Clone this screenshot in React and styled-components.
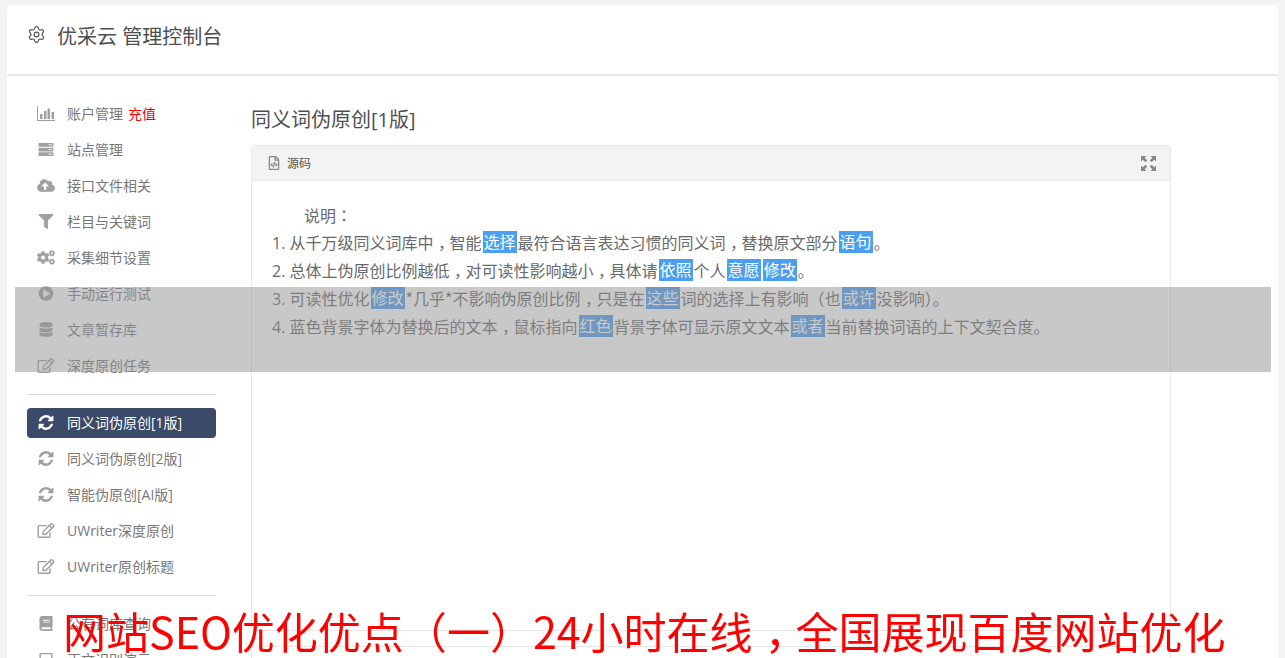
import styled, { createGlobalStyle } from "styled-components";
import {
  FaServer,
  FaCloudUploadAlt,
  FaFilter,
  FaCogs,
  FaPlayCircle,
  FaDatabase,
  FaRegEdit,
  FaBook,
  FaRegSquare,
  FaRegFileCode,
} from "react-icons/fa";
import { Settings } from "lucide-react";

const GlobalStyle = createGlobalStyle`
  html, body {
    margin: 0;
    padding: 0;
    height: 658px;
    overflow: hidden;
    background: #f3f3f3;
  }
  body {
    font-family: "Open Sans", "Noto Sans CJK SC", sans-serif;
    color: #676a6c;
  }
`;

const Page = styled.div`
  height: 658px;
  padding: 5px 7px 0;
  box-sizing: border-box;
  overflow: hidden;
`;

const Card = styled.div`
  background: #fff;
  border-radius: 5px 5px 0 0;
  height: 653px;
  overflow: hidden;
`;

const CardHeader = styled.header`
  height: 51px;
  border-bottom: 2px solid #e7eaec;
  display: flex;
  align-items: flex-start;
  padding: 18px 0 0 20px;
  gap: 11px;
  color: #555;

  h1 {
    margin: 1px 0 0;
    font-size: 20px;
    line-height: 26px;
    font-weight: 400;
    color: #4d4f51;
  }

  svg {
    margin-top: 2px;
  }
`;

const CardBody = styled.div`
  display: flex;
  gap: 35px;
  padding: 20px 0 0 20px;
`;

const Sidebar = styled.nav`
  width: 189px;
  flex: none;
  display: flex;
  flex-direction: column;
`;

const Row = styled.div`
  height: 36px;
  flex: none;
  box-sizing: border-box;
  padding: 0 0 2px 10px;
  display: flex;
  align-items: center;
  gap: 12px;
  font-size: 14px;
  color: #777;

  svg {
    width: 18px;
    height: 15px;
    flex: none;
    color: #a0a0a0;
  }
`;

const ActiveRow = styled(Row)`
  height: 30px;
  margin: 3px 0;
  background: #3a4a68;
  border-radius: 4px;
  color: #fff;

  svg {
    color: #fff;
  }
`;

const Recharge = styled.span`
  color: #f00;
  margin-left: 5px;
`;

const Divider = styled.hr`
  flex: none;
  border: 0;
  border-top: 1px solid #ddd;
  margin: 10px 0;
  width: 100%;
`;

const Main = styled.main`
  width: 920px;
  flex: none;
  padding-top: 11px;

  h2 {
    margin: 0 0 12px;
    font-size: 20px;
    line-height: 26px;
    font-weight: 400;
    color: #4d4f51;
  }
`;

const Panel = styled.section`
  border: 1px solid #e7e7e7;
  border-radius: 4px;
  height: ${(p) => p.$height}px;
  box-sizing: border-box;
  margin-bottom: 15px;
`;

const PanelBar = styled.div`
  height: 34px;
  background: #f3f3f3;
  border-bottom: 1px solid #e7e7e7;
  border-radius: 4px 4px 0 0;
  display: flex;
  align-items: center;
  gap: 6px;
  padding: 0 14px 0 15px;
  font-size: 12px;
  color: #555;

  svg {
    color: #888;
  }
`;

const Spacer = styled.div`
  flex: 1;
`;

const PanelContent = styled.div`
  padding: 20px 20px 0;
  font-size: 16px;
  line-height: 28px;
  color: #676a6c;

  p {
    margin: 0;
    height: 28px;
  }

  p:first-child {
    height: 27px;
    text-indent: 32px;
  }
`;

const Mark = styled.span`
  display: inline-block;
  vertical-align: top;
  margin: 3px 1px;
  line-height: 22px;
  background: #4a9ff2;
  color: #fff;
  padding: 0 1px;
`;

// the reference centres its full-width punctuation, which the TC cut of Noto does too
const Punct = styled.span`
  font-family: "Noto Sans CJK TC", sans-serif;
`;

// comma stays on the baseline but moves to the middle of its cell
const Comma = styled.span`
  font-family: "Noto Sans CJK SC", sans-serif;
  padding-left: 0.28em;
  margin-right: -0.28em;
`;

const Star = styled.span`
  font-family: "Noto Sans CJK SC", sans-serif;
`;

const Overlay = styled.div`
  position: fixed;
  left: 15px;
  top: 287px;
  width: 1256px;
  height: 85px;
  background: rgba(145, 145, 145, 0.5);
`;

const Banner = styled.div`
  position: fixed;
  left: 63px;
  top: 601px;
  font-size: 43px;
  line-height: 58px;
  color: #f00;
  white-space: nowrap;
  font-family: "Noto Sans CJK SC", sans-serif;
`;

const BarsIcon = () => (
  <svg viewBox="0 0 18 15" fill="currentColor">
    <path d="M0 0h1v14h17v1H0z" />
    <path d="M3 8h2.5v5H3zM7 5h2.5v8H7zM10.5 2.5H13V13h-2.5zM14.5 6H17v7h-2.5z" />
  </svg>
);

const RefreshIcon = () => (
  <svg viewBox="120 120 1552 1552" fill="currentColor">
    <path d="M1639 1056q0 5-1 7-64 268-268 434.5t-478 166.5q-146 0-282.5-55t-243.5-157l-129 129q-19 19-45 19t-45-19-19-45v-448q0-26 19-45t45-19h448q26 0 45 19t19 45-19 45l-137 137q71 66 161 102t187 36q134 0 250-65t186-179q11-17 53-117 8-23 30-23h192q13 0 22.5 9.5t9.5 22.5zm25-800v448q0 26-19 45t-45 19h-448q-26 0-45-19t-19-45 19-45l138-138q-148-137-349-137-134 0-250 65t-186 179q-11 17-53 117-8 23-30 23h-199q-13 0-22.5-9.5t-9.5-22.5v-7q65-268 270-434.5t480-166.5q146 0 284 55.5t245 156.5l130-129q19-19 45-19t45 19 19 45z" />
  </svg>
);

const ExpandIcon = () => (
  <svg width="15" height="15" viewBox="0 0 15 15" fill="currentColor">
    <path d="M0 0h5.5L3.7 1.8 6.3 4.4 4.4 6.3 1.8 3.7 0 5.5z" />
    <path d="M15 0v5.5l-1.8-1.8-2.6 2.6-1.9-1.9 2.6-2.6L9.5 0z" />
    <path d="M0 15V9.5l1.8 1.8 2.6-2.6 1.9 1.9-2.6 2.6L5.5 15z" />
    <path d="M15 15H9.5l1.8-1.8-2.6-2.6 1.9-1.9 2.6 2.6L15 9.5z" />
  </svg>
);

const topItems = [
  [FaServer, "站点管理"],
  [FaCloudUploadAlt, "接口文件相关"],
  [FaFilter, "栏目与关键词"],
  [FaCogs, "采集细节设置"],
  [FaPlayCircle, "手动运行测试"],
  [FaDatabase, "文章暂存库"],
  [FaRegEdit, "深度原创任务"],
];

const midItems = [
  [RefreshIcon, "同义词伪原创[2版]"],
  [RefreshIcon, "智能伪原创[AI版]"],
  [FaRegEdit, "UWriter深度原创"],
  [FaRegEdit, "UWriter原创标题"],
];

const bottomItems = [
  [FaBook, "公有词库查询"],
  [FaRegSquare, "正文识别演示"],
];

const NavRows = ({ items }) =>
  items.map(([Icon, label]) => (
    <Row key={label}>
      <Icon />
      {label}
    </Row>
  ));

const App = () => {
  return (
    <>
      <GlobalStyle />
      <Page>
        <Card>
          <CardHeader>
            <Settings size={19} strokeWidth={1.5} />
            <h1>优采云 管理控制台</h1>
          </CardHeader>
          <CardBody>
            <Sidebar>
              <Row>
                <BarsIcon />
                <span>
                  账户管理<Recharge>充值</Recharge>
                </span>
              </Row>
              <NavRows items={topItems} />
              <Divider />
              <ActiveRow>
                <RefreshIcon />
                同义词伪原创[1版]
              </ActiveRow>
              <NavRows items={midItems} />
              <Divider />
              <NavRows items={bottomItems} />
            </Sidebar>
            <Main>
              <h2>同义词伪原创[1版]</h2>
              <Panel $height={486}>
                <PanelBar>
                  <FaRegFileCode size={14} />
                  源码
                  <Spacer />
                  <ExpandIcon />
                </PanelBar>
                <PanelContent>
                  <p>说明<Punct>：</Punct></p>
                  <p>
                    1. 从千万级同义词库中<Comma>，</Comma>智能<Mark>选择</Mark>最符合语言表达习惯的同义词<Comma>，</Comma>替换原文部分<Mark>语句</Mark>。
                  </p>
                  <p>
                    2. 总体上伪原创比例越低<Comma>，</Comma>对可读性影响越小<Comma>，</Comma>具体请<Mark>依照</Mark>个人<Mark>意愿</Mark><Mark>修改</Mark>。
                  </p>
                  <p>
                    3. 可读性优化<Mark>修改</Mark><Star>*</Star>几乎<Star>*</Star>不影响伪原创比例<Comma>，</Comma>只是在<Mark>这些</Mark>词的选择上有影响<Punct>（</Punct>也<Mark>或许</Mark>没影响<Punct>）</Punct>。
                  </p>
                  <p>
                    4. 蓝色背景字体为替换后的文本<Comma>，</Comma>鼠标指向<Mark>红色</Mark>背景字体可显示原文文本<Mark>或者</Mark>当前替换词语的上下文契合度。
                  </p>
                </PanelContent>
              </Panel>
              <Panel $height={200} />
            </Main>
          </CardBody>
        </Card>
      </Page>
      <Overlay />
      <Banner>
        网站SEO优化优点<Punct>（</Punct>一<Punct>）</Punct>24小时在线<Comma>，</Comma>全国展现百度网站优化
      </Banner>
    </>
  );
};

export default App;
